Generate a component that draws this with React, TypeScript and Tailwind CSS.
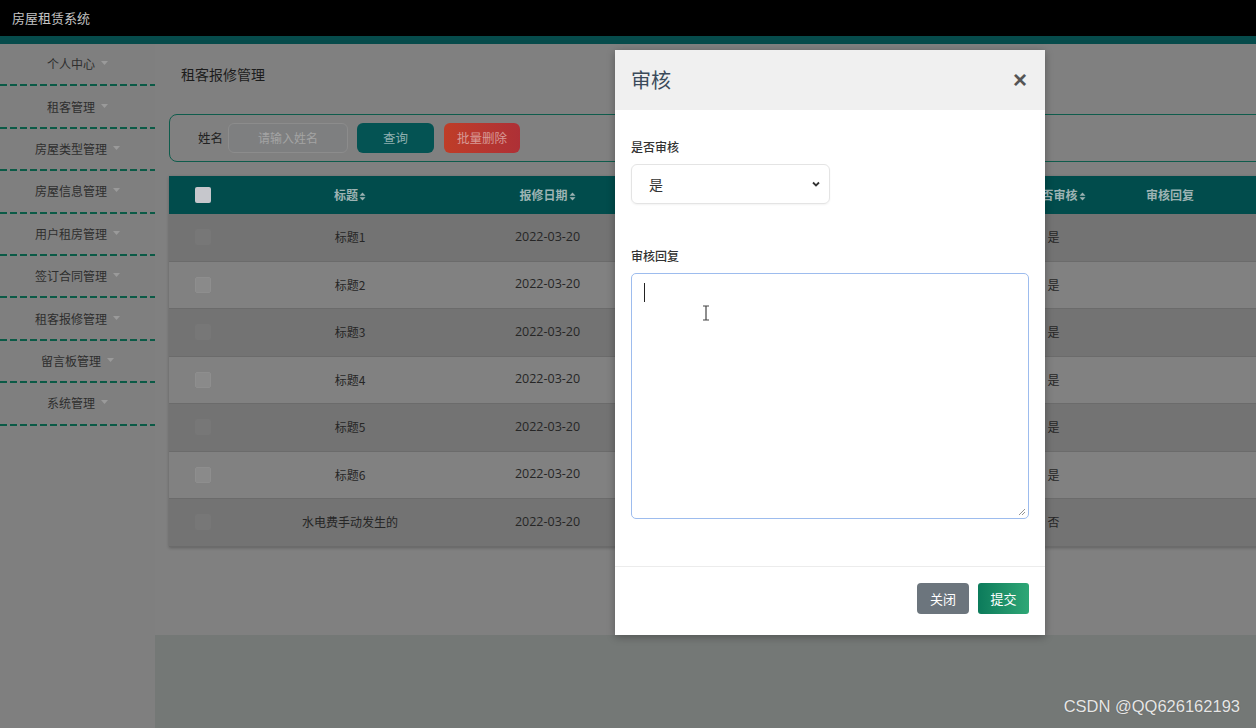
import React from "react";

const menu = [
  "个人中心",
  "租客管理",
  "房屋类型管理",
  "房屋信息管理",
  "用户租房管理",
  "签订合同管理",
  "租客报修管理",
  "留言板管理",
  "系统管理",
];

const rows = [
  { t: "标题1", s: "是" },
  { t: "标题2", s: "是" },
  { t: "标题3", s: "是" },
  { t: "标题4", s: "是" },
  { t: "标题5", s: "是" },
  { t: "标题6", s: "是" },
  { t: "水电费手动发生的", s: "否" },
];

function SortIcon() {
  return (
    <svg width="7" height="9" viewBox="0 0 7 9" className="inline-block ml-[1px]">
      <path d="M3.5 0.5 L6.5 3.8 L0.5 3.8 Z" fill="currentColor" />
      <path d="M3.5 8.5 L6.5 5.2 L0.5 5.2 Z" fill="currentColor" />
    </svg>
  );
}

function Caret() {
  return (
    <svg width="7" height="4" viewBox="0 0 7 4" className="ml-[6px] relative -top-[1px]">
      <path d="M0 0 L7 0 L3.5 4 Z" fill="#9a9a9a" />
    </svg>
  );
}

export default function App() {
  return (
    <div className="relative w-[1256px] h-[728px] overflow-hidden bg-[#808080] font-['Open_Sans','Noto_Sans_CJK_SC',sans-serif]">
      <div className="flex flex-col h-full">
        {/* top header */}
        <div className="h-[36px] bg-black flex items-center pl-[12px]">
          <span className="text-[13px] text-[#c4c4c4] font-['Noto_Sans_CJK_SC',sans-serif]">房屋租赁系统</span>
        </div>
        <div className="h-[8px] bg-[#064b4b]" />
        <div className="flex flex-1 min-h-0">
          {/* sidebar */}
          <div className="w-[155px] shrink-0 bg-[#7f7f7f]">
            {menu.map((m) => (
              <div key={m}>
                <div className="h-[40.4px] flex items-center justify-center text-[12px] text-[#2e2e2e] font-['Noto_Sans_CJK_SC',sans-serif]">
                  {m}
                  <Caret />
                </div>
                <div className="h-[2px] bg-[repeating-linear-gradient(90deg,#0b5a46_0_7px,transparent_7px_10px)]" />
              </div>
            ))}
          </div>
          {/* main */}
          <div className="flex-1 flex flex-col min-w-0">
            <div className="flex-1 pl-[14px] pt-[21px] overflow-hidden">
              <div className="text-[14px] leading-[18px] text-[#1c1c1c] pl-[12px] font-['Noto_Sans_CJK_SC',sans-serif]">租客报修管理</div>
              <div className="mt-[31px] h-[48px] w-[1110px] border-[1.5px] border-[#0f5c4c] rounded-[8px] flex items-center pl-[28px] bg-[#808080]">
                <span className="text-[12.5px] text-[#222] font-['Noto_Sans_CJK_SC',sans-serif]">姓名</span>
                <div className="ml-[5px] w-[120px] h-[30px] rounded-[6px] border border-[#8c8c8c] bg-[#7e7f80] flex items-center justify-center text-[12px] text-[#a4a4a4] font-['Noto_Sans_CJK_SC',sans-serif]">
                  请输入姓名
                </div>
                <div className="ml-[9px] w-[77px] h-[30px] rounded-[6px] bg-[#045353] flex items-center justify-center text-[12.5px] text-[#8fb0b0] font-['Noto_Sans_CJK_SC',sans-serif]">
                  查询
                </div>
                <div className="ml-[10px] w-[76px] h-[30px] rounded-[6px] bg-gradient-to-r from-[#bf3d27] to-[#ae3036] flex items-center justify-center text-[12.5px] text-[#d79a96] font-['Noto_Sans_CJK_SC',sans-serif]">
                  批量删除
                </div>
              </div>
              {/* table */}
              <div className="mt-[14px] w-[1110px] shadow-[0_1px_3px_rgba(0,0,0,0.25)]">
                <div className="h-[38px] bg-[#014c4c] flex items-center text-[12px] font-bold text-[#9db3b3] font-['Noto_Sans_CJK_SC',sans-serif]">
                  <div className="w-[81px] pl-[26px] flex items-center">
                    <div className="w-[16px] h-[16px] bg-[#c6c7cc] rounded-[2px]" />
                  </div>
                  <div className="w-[200px] text-center">标题<SortIcon /></div>
                  <div className="w-[195px] text-center">报修日期<SortIcon /></div>
                  <div className="w-[183px] text-center">报修内容<SortIcon /></div>
                  <div className="w-[182px] text-center">用户名<SortIcon /></div>
                  <div className="w-[95px] text-center">是否审核<SortIcon /></div>
                  <div className="w-[130px] text-center">审核回复</div>
                  <div className="flex-1" />
                </div>
                {rows.map((r, i) => (
                  <div
                    key={i}
                    className={`h-[47.5px] flex items-center text-[12px] text-[#262626] border-b border-[#6b6b6b] ${i % 2 === 0 ? "bg-[#737373]" : "bg-[#818181]"}`}
                  >
                    <div className="w-[81px] pl-[26px] flex items-center">
                      <div className={`w-[16px] h-[16px] rounded-[2px] ${i % 2 === 0 ? "bg-[#777777]" : "bg-[#8a8a8a] border border-[#8e8e8e]"}`} />
                    </div>
                    <div className="w-[200px] text-center font-['Noto_Sans_CJK_SC',sans-serif]">{r.t}</div>
                    <div className="w-[195px] text-center text-[12.5px]">2022-03-20</div>
                    <div className="w-[183px] text-center">内容</div>
                    <div className="w-[182px] text-center">用户</div>
                    <div className="w-[95px] pr-[8px] text-center font-['Noto_Sans_CJK_SC',sans-serif]">{r.s}</div>
                    <div className="w-[130px]" />
                    <div className="flex-1" />
                  </div>
                ))}
              </div>
            </div>
            <div className="h-[93px] bg-[#747876]" />
          </div>
        </div>
      </div>

      {/* modal */}
      <div className="absolute left-[615px] top-[50px] w-[430px] h-[585px] bg-white flex flex-col shadow-[0_2px_8px_rgba(0,0,0,0.3)]">
        <div className="h-[60px] bg-[#f0f0f0] flex items-center justify-between pl-[16px] pr-[18px]">
          <span className="text-[20px] text-[#3b4a5a] font-['Noto_Sans_CJK_SC',sans-serif]">审核</span>
          <span className="text-[24px] leading-none font-bold text-[#555] font-['Liberation_Sans',sans-serif]">×</span>
        </div>
        <div className="flex-1 px-[16px] pt-[29px]">
          <div className="text-[12px] font-medium text-[#333] leading-[16px] font-['Noto_Sans_CJK_SC',sans-serif]">是否审核</div>
          <div className="mt-[9px] w-[199px] h-[40px] rounded-[6px] border border-[#e4e4e4] shadow-[0_1px_2px_rgba(0,0,0,0.05)] flex items-center justify-between pl-[17px] pr-[8px]">
            <span className="text-[14px] text-[#333] font-['Noto_Sans_CJK_SC',sans-serif]">是</span>
            <svg width="10" height="10" viewBox="0 0 10 10">
              <path d="M2 3.5 L5 6.5 L8 3.5" stroke="#333" strokeWidth="1.8" fill="none" />
            </svg>
          </div>
          <div className="mt-[44px] text-[12px] font-medium text-[#333] leading-[16px] font-['Noto_Sans_CJK_SC',sans-serif]">审核回复</div>
          <div className="relative mt-[9px] w-[398px] h-[246px] rounded-[5px] border border-[#9dbcee] pl-[12px] pt-[9px]">
            <div className="w-px h-[19px] bg-[#222]" />
            <svg className="absolute left-[70px] top-[31px]" width="8" height="16" viewBox="0 0 8 16">
              <path d="M1 1 H7 M4 1 V15 M1 15 H7" stroke="#444" strokeWidth="1.2" fill="none" />
            </svg>
            <svg className="absolute right-[2px] bottom-[2px]" width="8" height="8" viewBox="0 0 8 8">
              <path d="M7 1 L1 7 M7 4 L4 7" stroke="#888" strokeWidth="0.9" />
            </svg>
          </div>
        </div>
        <div className="h-[69px] border-t border-[#ececec] flex items-start justify-end pt-[16px] pr-[16px] gap-[9px]">
          <div className="w-[52px] h-[31px] rounded-[4px] bg-[#6c757d] text-white text-[13px] flex items-center justify-center font-['Noto_Sans_CJK_SC',sans-serif]">
            关闭
          </div>
          <div className="w-[51px] h-[31px] rounded-[3px] bg-gradient-to-r from-[#0b7b5b] to-[#2ea776] text-white text-[13px] flex items-center justify-center font-['Noto_Sans_CJK_SC',sans-serif]">
            提交
          </div>
        </div>
      </div>

      {/* watermark */}
      <div className="absolute right-[16px] bottom-[9px] text-[16.5px] text-[#e6e6e6] font-['Liberation_Sans',sans-serif] [text-shadow:0_0_1px_#555]">
        CSDN @QQ626162193
      </div>
    </div>
  );
}
